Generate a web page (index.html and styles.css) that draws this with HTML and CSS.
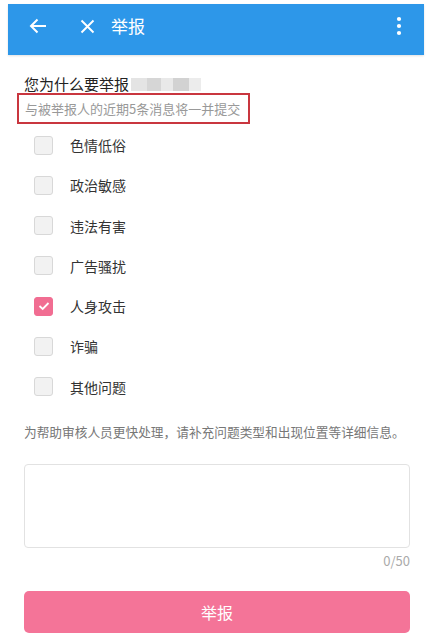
FILE: index.html
```html
<!DOCTYPE html>
<html lang="zh">
<head>
<meta charset="utf-8">
<link rel="stylesheet" href="styles.css">
</head>
<body>
<div class="page">
  <header class="bar">
    <svg class="ico back" width="18" height="16" viewBox="0 0 18 16"><path d="M17 8H2M8.5 1.5L2 8l6.5 6.5" fill="none" stroke="#fff" stroke-width="2"/></svg>
    <svg class="ico close" width="15" height="15" viewBox="0 0 15 15"><path d="M1.5 1.5l12 12M13.5 1.5l-12 12" fill="none" stroke="#fff" stroke-width="1.9"/></svg>
    <span class="title">举报</span>
    <span class="spacer"></span>
    <svg class="ico more" width="6" height="20" viewBox="0 0 6 20"><circle cx="3" cy="3" r="2.1" fill="#fff"/><circle cx="3" cy="10" r="2.1" fill="#fff"/><circle cx="3" cy="17" r="2.1" fill="#fff"/></svg>
  </header>

  <main class="content">
    <h1 class="heading">您为什么要举报<span class="blur"><i class="b1"></i><i class="b2"></i><i class="b3"></i><i class="b4"></i><i class="b5"></i></span></h1>
    <div class="note">与被举报人的近期5条消息将一并提交</div>

    <ul class="options">
      <li class="opt"><span class="box"></span><span class="lbl">色情低俗</span></li>
      <li class="opt"><span class="box"></span><span class="lbl">政治敏感</span></li>
      <li class="opt"><span class="box"></span><span class="lbl">违法有害</span></li>
      <li class="opt"><span class="box"></span><span class="lbl">广告骚扰</span></li>
      <li class="opt"><span class="box checked"><svg width="12" height="10" viewBox="0 0 12 10"><path d="M1.5 5l3.2 3L10.5 2" fill="none" stroke="#fff" stroke-width="1.8"/></svg></span><span class="lbl">人身攻击</span></li>
      <li class="opt"><span class="box"></span><span class="lbl">诈骗</span></li>
      <li class="opt"><span class="box"></span><span class="lbl">其他问题</span></li>
    </ul>

    <p class="hint">为帮助审核人员更快处理，请补充问题类型和出现位置等详细信息。</p>
    <div class="textarea"></div>
    <div class="count">0/50</div>
    <button class="submit">举报</button>
  </main>
</div>
</body>
</html>
```

FILE: styles.css
```css
* { box-sizing: border-box; }
html, body { margin: 0; padding: 0; background: #fff; }
body {
  font-family: "Noto Sans CJK SC", "Noto Sans", sans-serif;
  color: #222;
  width: 431px;
  height: 640px;
  overflow: hidden;
}
.page { padding-top: 4px; }
.bar {
  margin: 0 7px 0 8px;
  height: 51px;
  background: #2d97e9;
  display: flex;
  align-items: center;
  padding: 0 0 7px 0;
  box-shadow: 0 1px 2px rgba(0,0,0,0.12);
}
.ico { display: block; flex: none; }
.back { margin-left: 21px; }
.close { margin-left: 33px; }
.title {
  margin-left: 16px;
  color: #fff;
  font-size: 17px;
  line-height: 20px;
}
.spacer { flex: 1; }
.more { margin-right: 22px; }

.content { padding: 0 21px 0 24px; }
.heading {
  margin: 19px 0 0 0;
  font-size: 15px;
  font-weight: normal;
  line-height: 19px;
  height: 19px;
  color: #222;
  display: flex;
  align-items: center;
}
.blur {
  display: inline-flex;
  height: 13px;
  margin-left: 2px;
  margin-top: 1px;
}
.blur i { display: block; height: 13px; }
.blur .b1 { width: 16px; background: #e4e4e4; }
.blur .b2 { width: 14px; background: #d6d6d6; }
.blur .b3 { width: 12px; background: #e9e9e9; }
.blur .b4 { width: 16px; background: #d2d2d2; }
.blur .b5 { width: 12px; background: #ececec; }
.note {
  display: inline-block;
  margin: 0 0 0 -7px;
  height: 31px;
  width: 233px;
  padding: 0 0 0 6px;
  border: 2px solid #c9363f;
  font-size: 13px;
  line-height: 27px;
  color: #999;
  white-space: nowrap;
}

.options {
  list-style: none;
  margin: 1px 0 0 0;
  padding: 0;
}
.opt {
  height: 40.25px;
  display: flex;
  align-items: center;
  padding-left: 10px;
}
.box {
  width: 19px;
  height: 19px;
  border: 1px solid #d8d8d8;
  border-radius: 3px;
  background: #f2f2f2;
  flex: none;
  display: flex;
  align-items: center;
  justify-content: center;
}
.box.checked { background: #f16d92; border-color: #f16d92; }
.lbl {
  margin-left: 17px;
  font-size: 14px;
  line-height: 20px;
  color: #333;
}

.hint {
  margin: 15px 0 0 0;
  font-size: 12.7px;
  line-height: 20px;
  color: #777;
  white-space: nowrap;
}
.textarea {
  margin-top: 22px;
  height: 84px;
  width: 386px;
  border: 1px solid #e2e2e2;
  border-radius: 4px;
  background: #fff;
}
.count {
  width: 386px;
  text-align: right;
  margin-top: 4px;
  font-size: 13px;
  line-height: 18px;
  color: #aaa;
}
.submit {
  display: block;
  margin-top: 21px;
  width: 386px;
  height: 42px;
  border: 0;
  border-radius: 5px;
  background: #f47498;
  color: #fff;
  font-family: "Noto Sans CJK SC", sans-serif;
  font-size: 16px;
  padding: 0;
}
```
